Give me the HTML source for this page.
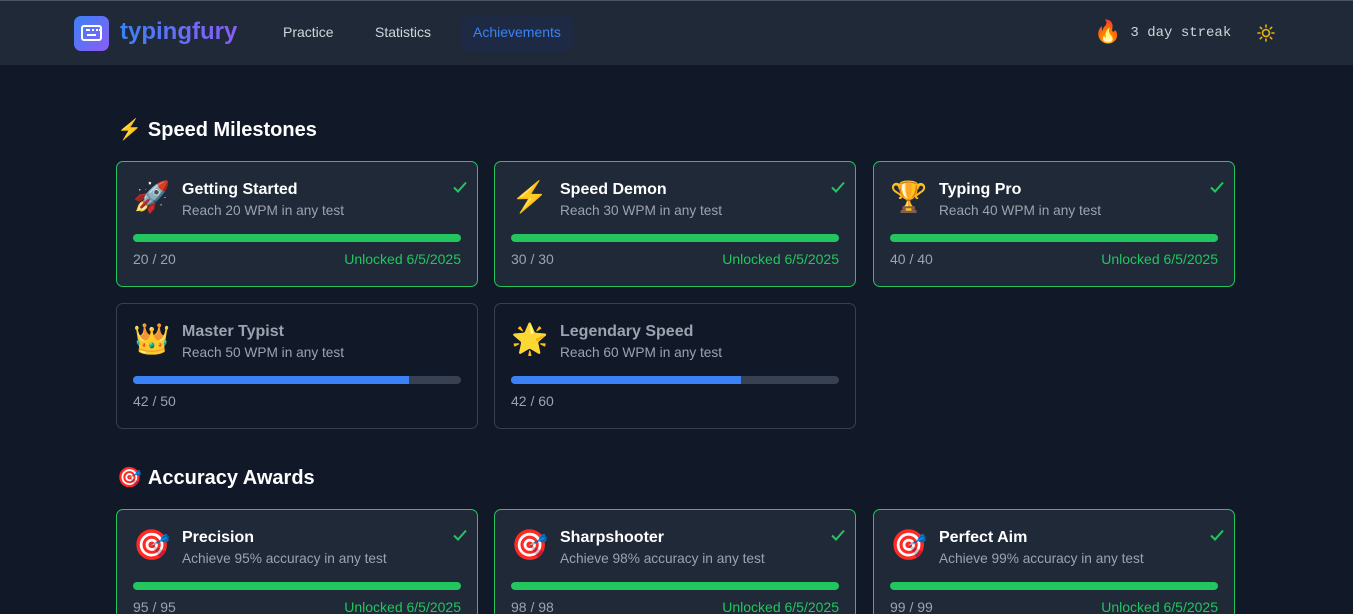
<!DOCTYPE html>
<html><head><meta charset="utf-8"><style>
*{box-sizing:border-box;margin:0;padding:0}
html,body{width:1353px;height:614px;overflow:hidden}
body{background:#111827;font-family:"Liberation Sans","Noto Color Emoji",sans-serif;color:#fff;position:relative}
.hdr{height:65px;background:#1f2937;border-top:1px solid #4b5563;position:relative}
.logo{position:absolute;left:74px;top:15px;width:35px;height:35px;border-radius:7px;background:linear-gradient(135deg,#3b82f6,#8b5cf6)}
.logo i{position:absolute;left:7px;top:9px;width:21px;height:16px;border:2px solid #fff;border-radius:3px}
.logo i:before{content:"";position:absolute;left:3px;top:2px;width:11px;height:2px;border-left:2px dotted #fff;border-right:2px dotted #fff;background:repeating-linear-gradient(90deg,#fff 0 2px,transparent 2px 4px)}
.logo i:after{content:"";position:absolute;left:4px;top:7px;width:9px;height:2px;background:#fff}
.brand{position:absolute;left:120px;top:17px;font-size:24px;font-weight:bold;background:linear-gradient(90deg,#3b82f6,#8b5cf6);-webkit-background-clip:text;color:transparent}
.nav{position:absolute;top:15px;height:35px;line-height:33px;font-size:14px;color:#d1d5db;padding:0 12px;border-radius:6px}
.streak{position:absolute;left:1094px;top:18px;font-size:22px}
.streak span{font-family:"Liberation Mono",monospace;font-size:14px;color:#d1d5db;position:relative;top:-3px;margin-left:9px}
.sun{position:absolute;left:1257px;top:23px}
h2{position:absolute;left:117px;font-size:20px;font-weight:bold}
h2 span{margin-right:6px}
.card{position:absolute;width:362px;height:126px;border-radius:7px;background:#1f2937;border:1px solid #22c55e}
.card.l{background:#111827;border-color:#374151}
.ic{position:absolute;left:16px;top:18px;font-size:30px;line-height:36px}
.t{position:absolute;left:65px;top:19px;font-size:16px;font-weight:bold}
.l .t{color:#9ca3af}
.d{position:absolute;left:65px;top:41px;font-size:13.7px;color:#9ca3af}
.bar{position:absolute;left:16px;top:72px;width:328px;height:8px;border-radius:4px;background:#374151;overflow:hidden}
.bar b{display:block;height:100%;background:#22c55e}
.l .bar b{background:#3b82f6}
.n{position:absolute;left:16px;top:89px;font-size:14px;color:#9ca3af}
.u{position:absolute;right:16px;top:89px;font-size:14px;color:#22c55e}
.ck{position:absolute;right:8px;top:16px}
</style></head><body>
<div class="hdr">
<div class="logo"><i></i></div>
<div class="brand">typingfury</div>
<div class="nav" style="left:271px">Practice</div>
<div class="nav" style="left:363px">Statistics</div>
<div class="nav" style="left:461px;background:#1e2a44;color:#3b82f6">Achievements</div>
<div class="streak">🔥<span>3 day streak</span></div>
<svg class="sun" width="18" height="18" viewBox="0 0 18 18" fill="none" stroke="#eab308" stroke-width="1.6" stroke-linecap="round"><circle cx="9" cy="9" r="3.5"/><path d="M9 1v2M9 15v2M1 9h2M15 9h2M3.3 3.3l1.4 1.4M13.3 13.3l1.4 1.4M3.3 14.7l1.4-1.4M13.3 4.7l1.4-1.4"/></svg>
</div>
<h2 style="top:117px"><span>⚡</span>Speed Milestones</h2>
<h2 style="top:465px"><span>🎯</span>Accuracy Awards</h2>
<div id="c"></div>
<script>
var ck='<svg class="ck" width="18" height="18" viewBox="0 0 18 18" fill="none" stroke="#22c55e" stroke-width="2"><path d="M3 9.5l4 4 8-9"/></svg>';
var d=[[116,161,'🚀','Getting Started','Reach 20 WPM in any test','20 / 20',100,1],
[494,161,'⚡','Speed Demon','Reach 30 WPM in any test','30 / 30',100,1],
[873,161,'🏆','Typing Pro','Reach 40 WPM in any test','40 / 40',100,1],
[116,303,'👑','Master Typist','Reach 50 WPM in any test','42 / 50',84,0],
[494,303,'🌟','Legendary Speed','Reach 60 WPM in any test','42 / 60',70,0],
[116,509,'🎯','Precision','Achieve 95% accuracy in any test','95 / 95',100,1],
[494,509,'🎯','Sharpshooter','Achieve 98% accuracy in any test','98 / 98',100,1],
[873,509,'🎯','Perfect Aim','Achieve 99% accuracy in any test','99 / 99',100,1]];
var h='';d.forEach(function(a){h+='<div class="card'+(a[7]?'':' l')+'" style="left:'+a[0]+'px;top:'+a[1]+'px"><div class="ic">'+a[2]+'</div><div class="t">'+a[3]+'</div><div class="d">'+a[4]+'</div><div class="bar"><b style="width:'+a[6]+'%"></b></div><div class="n">'+a[5]+'</div>'+(a[7]?'<div class="u">Unlocked 6/5/2025</div>'+ck:'')+'</div>'});
document.getElementById('c').innerHTML=h;
</script>
</body></html>
